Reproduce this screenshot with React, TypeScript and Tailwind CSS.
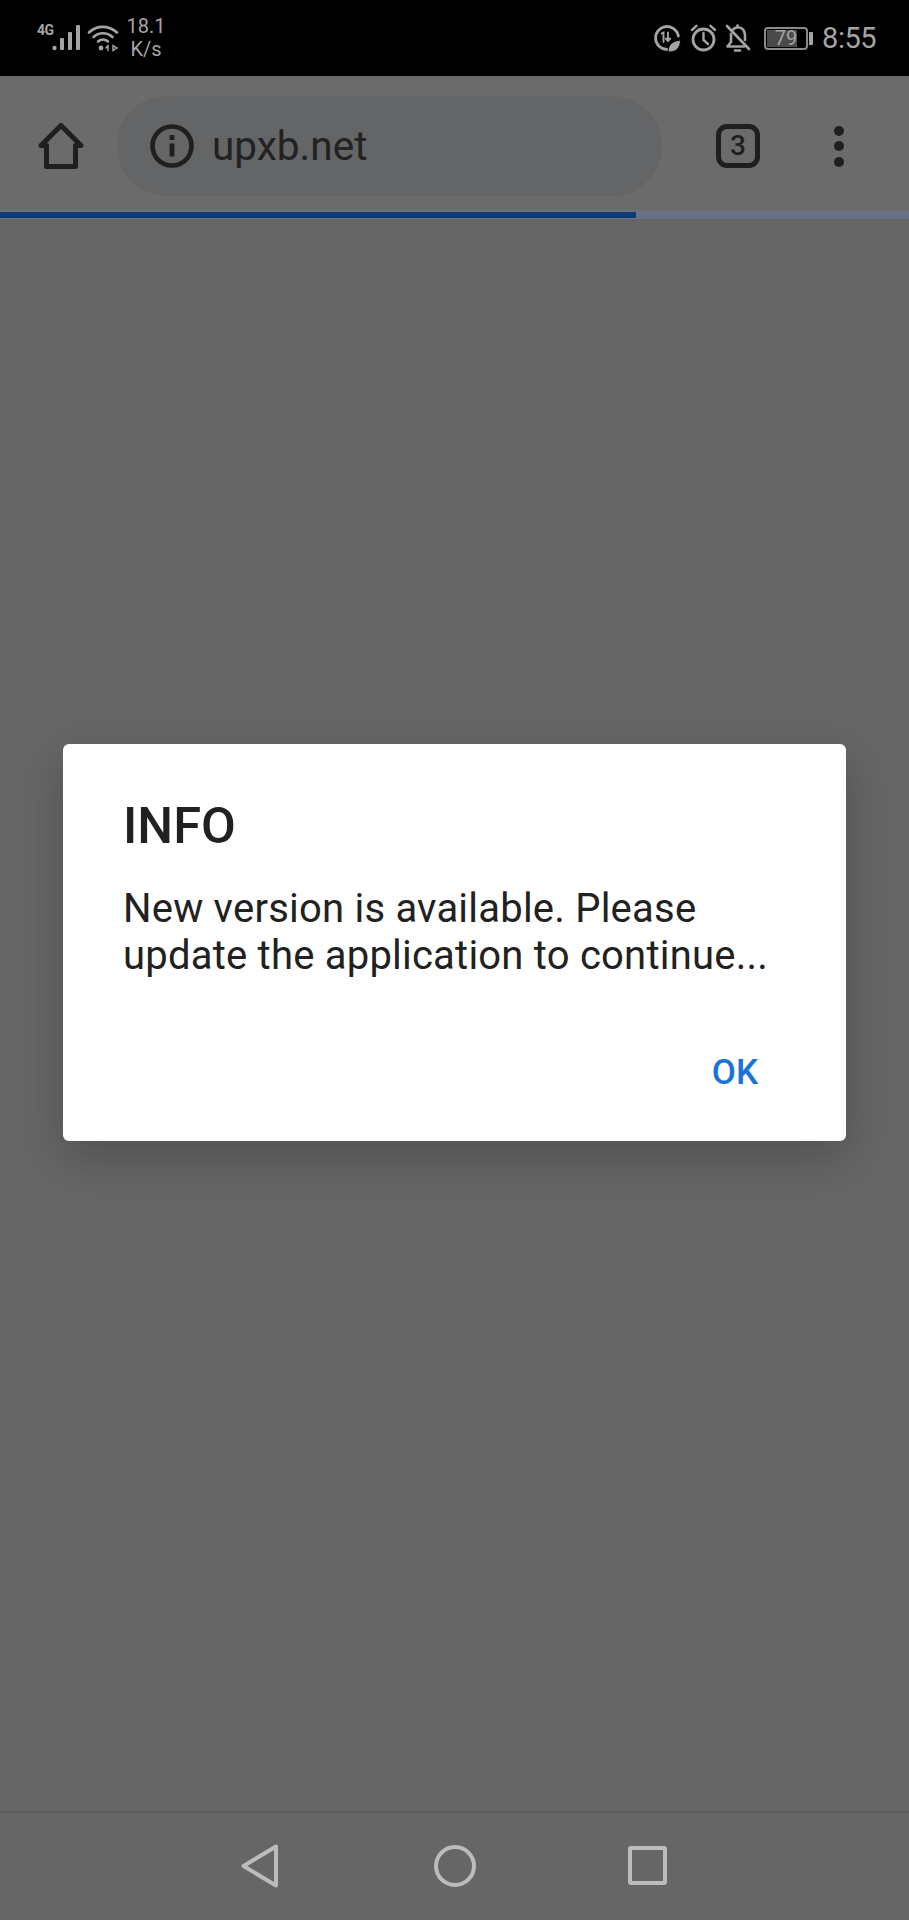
import React from "react";

const Signal = () => (
  <svg width="30" height="30" viewBox="0 0 30 30" className="text-[#a4a4a4]" fill="currentColor">
    <circle cx="2.5" cy="25" r="2.2" />
    <rect x="8" y="15" width="4" height="12" rx="1" />
    <rect x="16" y="9" width="4" height="18" rx="1" />
    <rect x="24" y="2" width="4" height="25" rx="1" />
  </svg>
);

const Wifi = () => (
  <svg width="33" height="28" viewBox="0 0 33 28" fill="none" stroke="#a4a4a4" strokeWidth="2.6" strokeLinecap="round">
    <path d="M2 8.5C10 1 21 1 30 8.5" />
    <path d="M6.5 13C12 8 20 8 25.5 13" />
    <path d="M11 17.5C14 15 18 15 21 17.5" />
    <circle cx="14" cy="24" r="2.4" fill="#a4a4a4" stroke="none" />
    <path d="M21 21.5V26.5M19 24L21 21.5M26 21.5V26.5L30 24Z" strokeWidth="1.5" />
  </svg>
);

const DataSaver = () => (
  <svg width="28" height="30" viewBox="0 0 28 30" fill="none" stroke="#a4a4a4" strokeWidth="2.8">
    <path d="M14 26.5A11.5 11.5 0 1 1 25.4 13" strokeLinecap="round" />
    <path d="M8.5 10.5L10.5 9.5V19M15 9.5V18M15 18L12.8 15.5M15 18L17.2 15.5" strokeWidth="1.9" strokeLinecap="round" fill="none" />
    <path d="M15 29C15 21 20 18 27.5 17C27.5 25 23 29.5 15 29Z" fill="#a4a4a4" stroke="#000000" strokeWidth="1" />
  </svg>
);

const Alarm = () => (
  <svg width="27" height="28" viewBox="0 0 27 28" fill="none" stroke="#a4a4a4" strokeWidth="2.8" strokeLinecap="round">
    <circle cx="13.5" cy="15.5" r="10.5" />
    <path d="M13.5 9V16L18 20" strokeWidth="2.4" />
    <path d="M2 6L6.5 1.8M25 6L20.5 1.8" strokeWidth="2.4" />
  </svg>
);

const BellOff = () => (
  <svg width="26" height="28" viewBox="0 0 26 28" fill="none" stroke="#a4a4a4" strokeWidth="2.6" strokeLinecap="round" strokeLinejoin="round">
    <path d="M6 10V18L2.5 22.5H19" />
    <path d="M8 5.5C9 4.2 10.5 3.5 12.5 3.2C17 3 20 6.5 20 11V16" />
    <path d="M12.5 1.5V3M10 26.5H15" />
    <path d="M2 2L24 25" />
  </svg>
);

const Home = () => (
  <svg width="46" height="46" viewBox="0 0 46 46" fill="none" stroke="#1f1f1f" strokeWidth="5" strokeLinejoin="round" strokeLinecap="round">
    <path d="M3 22.5L23 2.5L43 22.5H37.5V43.5H8.5V22.5Z" />
  </svg>
);

const Info = () => (
  <svg width="44" height="44" viewBox="0 0 44 44" fill="none">
    <circle cx="22" cy="22" r="19.5" stroke="#1f1f1f" strokeWidth="4.6" />
    <rect x="19.6" y="19.5" width="4.8" height="13" fill="#1f1f1f" />
    <rect x="19.6" y="11" width="4.8" height="5" fill="#1f1f1f" />
  </svg>
);

const Back = () => (
  <svg width="38" height="44" viewBox="0 0 38 44" fill="none" stroke="#bcbcbc" strokeWidth="4" strokeLinejoin="round">
    <path d="M2.5 22L35 2.5V41.5Z" />
  </svg>
);

export default function App() {
  return (
    <div className="flex h-[1920px] w-[909px] flex-col overflow-hidden bg-[#666666] font-['Roboto',sans-serif]">
      {/* status bar */}
      <div className="flex h-[76px] shrink-0 items-center justify-between bg-black pl-[37px] pr-[33px] text-[#a4a4a4]">
        <div className="flex items-center">
          <div className="flex items-end">
            <span className="mb-[16px] w-[15px] text-[14px] font-bold leading-none tracking-[-0.5px]">4G</span>
            <Signal />
          </div>
          <div className="ml-[5px]"><Wifi /></div>
          <div className="ml-[8px] flex w-[36px] flex-col items-center text-[20px] leading-[23px]">
            <span>18.1</span>
            <span>K/s</span>
          </div>
        </div>
        <div className="flex items-center">
          <DataSaver />
          <div className="ml-[9px]"><Alarm /></div>
          <div className="ml-[8px]"><BellOff /></div>
          <div className="ml-[13px] flex items-center">
            <div className="relative h-[23px] w-[44px] rounded-[4px] border-2 border-[#8a8a8a]">
              <div className="absolute inset-y-[1px] left-[1px] w-[30px] bg-[#4a4a4a]" />
              <span className="absolute inset-0 flex items-center justify-center text-[20px] leading-none">79</span>
            </div>
            <div className="ml-[1px] h-[13px] w-[4px] rounded-r-[1px] bg-[#a4a4a4]" />
          </div>
          <span className="ml-[9px] text-[29px] leading-none tracking-[-0.5px]">8:55</span>
        </div>
      </div>

      {/* browser toolbar */}
      <div className="flex h-[135px] shrink-0 items-center bg-[#6b6b6b] pt-[5px]">
        <div className="ml-[38px]"><Home /></div>
        <div className="ml-[33px] flex h-[100px] w-[545px] items-center rounded-[50px] bg-[#646567] pl-[33px]">
          <Info />
          <span className="ml-[18px] text-[40.5px] leading-none text-[#222222]">upxb.net</span>
        </div>
        <div className="ml-[54px] flex h-[44px] w-[44px] items-center justify-center rounded-[11px] border-[5px] border-[#1f1f1f] text-[28px] font-medium leading-none text-[#1f1f1f]">
          3
        </div>
        <div className="ml-[74px] flex flex-col gap-[5.5px]">
          <div className="h-[10px] w-[10px] rounded-full bg-[#1f1f1f]" />
          <div className="h-[10px] w-[10px] rounded-full bg-[#1f1f1f]" />
          <div className="h-[10px] w-[10px] rounded-full bg-[#1f1f1f]" />
        </div>
      </div>

      {/* page load progress */}
      <div className="flex h-[8px] shrink-0 items-center bg-[#6a7186]">
        <div className="h-[6px] w-[636px] bg-[#0f3a75]" />
      </div>

      {/* page with dialog */}
      <div className="flex-1 px-[63px] pt-[525px]">
        <div className="flex h-[397px] w-[783px] flex-col rounded-[6px] bg-white pl-[60px] pr-[26px] shadow-[0_16px_48px_rgba(0,0,0,0.22)]">
          <h1 className="mt-[53px] text-[50.5px] font-medium leading-[58px] text-[#212121]">INFO</h1>
          <p className="mt-[30px] text-[40px] leading-[47px] tracking-[0.22px] text-[#212121]">
            New version is available. Please
            <br />
            update the application to continue...
          </p>
          <div className="mt-[73px] flex justify-end pr-[62px]">
            <span className="text-[35px] font-medium leading-[42px] text-[#1a73d9]">OK</span>
          </div>
        </div>
      </div>

      {/* navigation bar */}
      <div className="flex h-[109px] shrink-0 items-start border-t-2 border-[#5c5c5c] bg-[#666666] pt-[31px]">
        <div className="ml-[241px]"><Back /></div>
        <div className="ml-[155px] mt-[1px] h-[42px] w-[42px] rounded-full border-4 border-[#bcbcbc]" />
        <div className="ml-[152px] mt-[2px] h-[39px] w-[39px] rounded-[3px] border-4 border-[#bcbcbc]" />
      </div>
    </div>
  );
}
